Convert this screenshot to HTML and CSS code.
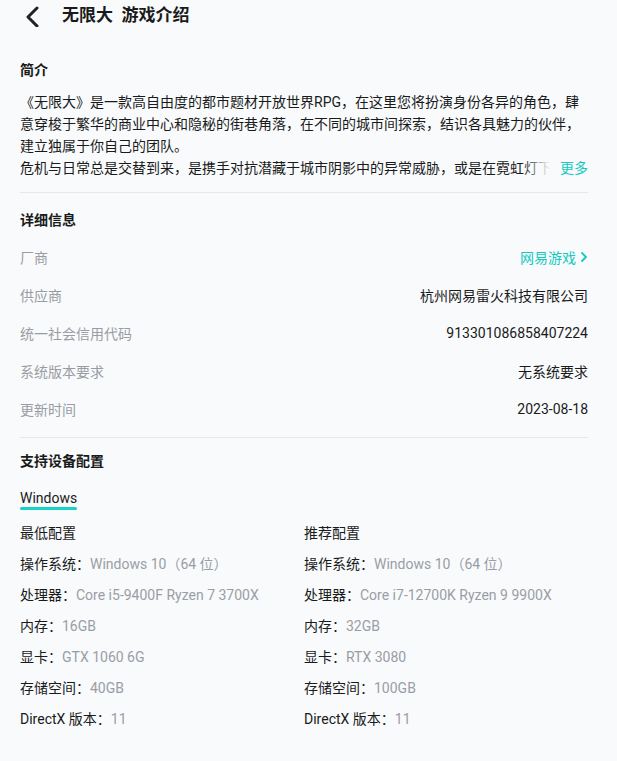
FILE: index.html
```html
<!DOCTYPE html>
<html lang="zh-CN">
<head>
    <meta charset="UTF-8">
    <meta name="viewport" content="width=device-width, initial-scale=1.0">
    <title>无限大 游戏介绍</title>
    <link rel="stylesheet" href="styles.css">
</head>
<body>
    <div class="header">
        <svg class="back" width="16" height="22" viewBox="0 0 16 22">
            <polyline points="12,3 3,12 12,21" fill="none" stroke="#222" stroke-width="3" stroke-linecap="round" stroke-linejoin="round"/>
        </svg>
        <h1>无限大&nbsp;&nbsp;游戏介绍</h1>
    </div>

    <div class="page">
        <h3 class="section-title intro-title">简介</h3>
        <div class="intro">
            <p>《无限大》是一款高自由度的都市题材开放世界RPG，在这里您将扮演身份各异的角色，肆意穿梭于繁华的商业中心和隐秘的街巷角落，在不同的城市间探索，结识各具魅力的伙伴，建立独属于你自己的团队。</p>
            <p>危机与日常总是交替到来，是携手对抗潜藏于城市阴影中的异常威胁，或是在霓虹灯下享受片刻的安宁，一切都由你来决定。</p>
            <span class="more"><span class="fade"></span>更多</span>
        </div>

        <div class="divider"></div>

        <h3 class="section-title">详细信息</h3>
        <div class="info">
            <div class="info-row">
                <span class="label">厂商</span>
                <span class="value link">网易游戏
                    <svg width="8" height="12" viewBox="0 0 8 12"><polyline points="2,2 6,6 2,10" fill="none" stroke="#16c9c0" stroke-width="1.8" stroke-linecap="round" stroke-linejoin="round"/></svg>
                </span>
            </div>
            <div class="info-row">
                <span class="label">供应商</span>
                <span class="value">杭州网易雷火科技有限公司</span>
            </div>
            <div class="info-row">
                <span class="label">统一社会信用代码</span>
                <span class="value">913301086858407224</span>
            </div>
            <div class="info-row">
                <span class="label">系统版本要求</span>
                <span class="value">无系统要求</span>
            </div>
            <div class="info-row">
                <span class="label">更新时间</span>
                <span class="value">2023-08-18</span>
            </div>
        </div>

        <div class="divider"></div>

        <h3 class="section-title">支持设备配置</h3>
        <div class="tabs">
            <span class="tab active">Windows</span>
        </div>

        <div class="specs">
            <div class="spec-col">
                <div class="spec-title">最低配置</div>
                <div class="spec-row">操作系统：<span>Windows 10（64 位）</span></div>
                <div class="spec-row">处理器：<span>Core i5-9400F Ryzen 7 3700X</span></div>
                <div class="spec-row">内存：<span>16GB</span></div>
                <div class="spec-row">显卡：<span>GTX 1060 6G</span></div>
                <div class="spec-row">存储空间：<span>40GB</span></div>
                <div class="spec-row">DirectX 版本：<span>11</span></div>
            </div>
            <div class="spec-col">
                <div class="spec-title">推荐配置</div>
                <div class="spec-row">操作系统：<span>Windows 10（64 位）</span></div>
                <div class="spec-row">处理器：<span>Core i7-12700K Ryzen 9 9900X</span></div>
                <div class="spec-row">内存：<span>32GB</span></div>
                <div class="spec-row">显卡：<span>RTX 3080</span></div>
                <div class="spec-row">存储空间：<span>100GB</span></div>
                <div class="spec-row">DirectX 版本：<span>11</span></div>
            </div>
        </div>
    </div>
</body>
</html>
```

FILE: styles.css
```css
* {
    box-sizing: border-box;
}
body {
    margin: 0;
    background: #f8fafc;
    font-family: Roboto, 'Noto Sans CJK SC', sans-serif;
    font-size: 14px;
    color: #1a1a1a;
}
.header {
    display: flex;
    align-items: center;
    height: 30px;
    padding-left: 25px;
}
.back {
    display: block;
    margin-top: 1px;
}
.header h1 {
    margin: 0 0 0 21px;
    font-size: 17px;
    font-weight: 700;
    line-height: 30px;
    color: #1a1a1a;
}
.page {
    padding: 0 29px 20px 20px;
}
.section-title {
    margin: 0;
    font-size: 14px;
    font-weight: 700;
    line-height: 20px;
}
.intro-title {
    margin-top: 30px;
}
.intro {
    position: relative;
    margin-top: 11px;
    height: 88px;
    overflow: hidden;
    line-height: 22px;
    color: #1a1a1a;
}
.intro p {
    margin: 0;
}
.more {
    position: absolute;
    right: 0;
    top: 66px;
    padding-left: 10px;
    background: #f8fafc;
    color: #16c9c0;
}
.fade {
    position: absolute;
    top: 0;
    right: 100%;
    width: 28px;
    height: 22px;
    background: linear-gradient(90deg, rgba(248, 250, 252, 0), #f8fafc);
}
.divider {
    height: 1px;
    background: #e4e7eb;
    margin: 13px 0 17px;
}
.info {
    margin-top: 8px;
}
.info-row {
    display: flex;
    justify-content: space-between;
    align-items: center;
    height: 38px;
}
.label {
    color: #999da3;
}
.value {
    color: #1a1a1a;
}
.value.link {
    display: flex;
    align-items: center;
    gap: 4px;
    color: #16c9c0;
}
.info + .divider {
    margin: 9px 0 13px;
}
.tabs {
    margin-top: 17px;
    display: flex;
}
.tab {
    position: relative;
    line-height: 20px;
    color: #1a1a1a;
}
.tab.active::after {
    content: '';
    position: absolute;
    left: 0;
    right: 0;
    bottom: -2px;
    height: 3px;
    border-radius: 2px;
    background: #16d3c6;
}
.specs {
    display: grid;
    grid-template-columns: 1fr 1fr;
    margin-top: 10px;
}
.spec-title,
.spec-row {
    line-height: 31px;
    color: #1a1a1a;
}
.spec-row span {
    color: #9a9ea4;
}
```
